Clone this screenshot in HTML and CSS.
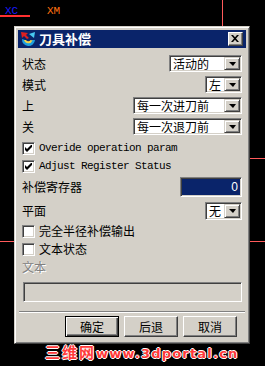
FILE: index.html
```html
<!DOCTYPE html>
<html lang="zh-CN">
<head>
  <meta charset="UTF-8" />
  <title>刀具补偿</title>
  <link rel="stylesheet" href="styles.css">
</head>
<body>

<div class="canvas-mark mark-xc">XC</div>
<div class="canvas-mark mark-xm">XM</div>
<div class="line line-xc"></div>
<div class="line line-v"></div>
<div class="line line-r1"></div>
<div class="line line-l2"></div>
<div class="line line-r2"></div>

<div class="dialog">
  <div class="titlebar">
    <svg class="title-icon" width="16" height="16" viewBox="0 0 16 16">
      <path d="M2 8 A6.5 6.5 0 0 0 15 9 L12 9 A4 4 0 0 1 5 9 Z" fill="#1e9fe0"/>
      <path d="M4 9 A4.5 4.5 0 0 0 12.5 9.5 L10.5 9 A2.6 2.6 0 0 1 6 9 Z" fill="#f2d24a"/>
      <path d="M9 3 L15 1 L14 7 Z" fill="#48c8f0"/>
      <path d="M1 1 L8 2 L6 4 L9 7 L7 8 L4 5 L2 7 Z" fill="#e02020"/>
    </svg>
    <span class="title-text">刀具补偿</span>
    <button class="btn-close">
      <svg width="8" height="7" viewBox="0 0 8 7"><path d="M0 0h2l2 2.3L6 0h2L5 3.5L8 7H6L4 4.7L2 7H0l3-3.5z" fill="#000"/></svg>
    </button>
  </div>

  <div class="content">
    <div class="row">
      <span class="lbl">状态</span>
      <div class="combo w-status"><span class="combo-val">活动的</span><span class="combo-btn"><i class="arrow"></i></span></div>
    </div>
    <div class="row">
      <span class="lbl">模式</span>
      <div class="combo w-short"><span class="combo-val">左</span><span class="combo-btn"><i class="arrow"></i></span></div>
    </div>
    <div class="row">
      <span class="lbl">上</span>
      <div class="combo w-long"><span class="combo-val">每一次进刀前</span><span class="combo-btn"><i class="arrow"></i></span></div>
    </div>
    <div class="row">
      <span class="lbl">关</span>
      <div class="combo w-long"><span class="combo-val">每一次退刀前</span><span class="combo-btn"><i class="arrow"></i></span></div>
    </div>

    <div class="check first">
      <span class="box"><svg width="7" height="7" viewBox="0 0 7 7"><path d="M0 2v3l2 2 5-5V-1L2 4z" fill="#000"/></svg></span>
      <span class="mono">Overide operation param</span>
    </div>
    <div class="check">
      <span class="box"><svg width="7" height="7" viewBox="0 0 7 7"><path d="M0 2v3l2 2 5-5V-1L2 4z" fill="#000"/></svg></span>
      <span class="mono">Adjust Register Status</span>
    </div>

    <div class="row row-tall">
      <span class="lbl">补偿寄存器</span>
      <div class="field w-reg"><span class="sel">0</span></div>
    </div>
    <div class="row row-plane">
      <span class="lbl">平面</span>
      <div class="combo w-short tall"><span class="combo-val">无</span><span class="combo-btn"><i class="arrow"></i></span></div>
    </div>

    <div class="check">
      <span class="box"></span>
      <span class="lbl">完全半径补偿输出</span>
    </div>
    <div class="check">
      <span class="box"></span>
      <span class="lbl">文本状态</span>
    </div>

    <div class="lbl disabled">文本</div>
    <div class="field text-off"></div>

    <div class="sep"></div>

    <div class="btns">
      <button class="btn btn-default">确定</button>
      <button class="btn">后退</button>
      <button class="btn">取消</button>
    </div>
  </div>
</div>

<div class="watermark"><span class="wm-cn">三维网</span>www.3dportal.cn</div>

</body>
</html>
```

FILE: styles.css
```css
* { box-sizing: border-box; margin: 0; padding: 0; }
body {
  background: #000;
  font-family: "Noto Sans CJK SC", "DejaVu Sans", sans-serif;
  font-size: 12px;
  color: #000;
  padding: 26px 0 0 14px;
  position: relative;
  min-height: 366px;
  overflow: hidden;
}

/* marcas do desenho atras da janela */
.canvas-mark {
  position: absolute;
  top: 6px;
  font-family: "Liberation Mono", monospace;
  font-size: 11px;
  line-height: 11px;
}
.mark-xc { left: 5px; color: #1a1aff; }
.mark-xm { left: 47px; color: #ff7010; }
.line { position: absolute; background: #ff3030; }
.line-xc { left: 0; top: 15px; width: 30px; height: 2px; }
.line-v { left: 222px; top: 0; width: 1px; height: 26px; background: #ff5a5a; }
.line-r1 { left: 250px; top: 158px; width: 15px; height: 1px; background: #ff5a5a; }
.line-l2 { left: 0; top: 241px; width: 14px; height: 1px; background: #ff5a5a; }
.line-r2 { left: 250px; top: 241px; width: 15px; height: 1px; background: #ff5a5a; }

.dialog {
  width: 236px;
  background: #d4d0c8;
  border: 1px solid;
  border-color: #d4d0c8 #404040 #404040 #d4d0c8;
  box-shadow: inset 1px 1px #fff, inset -1px -1px #808080;
  padding: 3px;
  position: relative;
}
.titlebar {
  height: 18px;
  background: #0a246a;
  display: flex;
  align-items: center;
  padding: 0 3px 0 2px;
}
.title-icon { flex: none; }
.title-text {
  color: #fff;
  font-weight: bold;
  font-size: 13px;
  margin-left: 3px;
  flex-grow: 1;
  line-height: 18px;
}
.btn-close {
  width: 15px;
  height: 14px;
  background: #d4d0c8;
  border: 1px solid;
  border-color: #fff #404040 #404040 #fff;
  box-shadow: inset -1px -1px #808080;
  display: flex;
  align-items: center;
  justify-content: center;
  padding: 0 1px 1px 0;
}

.content {
  padding: 5px 4px 3px 4px;
}
.row {
  height: 21px;
  display: flex;
  align-items: center;
  justify-content: space-between;
}
.row-tall { height: 24px; }
.row-plane { height: 23px; }
.lbl { line-height: 14px; white-space: nowrap; }

.combo {
  height: 17px;
  display: flex;
  background: #fff;
  border: 1px solid;
  border-color: #808080 #fff #fff #808080;
  box-shadow: inset 1px 1px #404040, inset -1px -1px #d4d0c8;
  padding: 1px;
}
.combo.tall { height: 18px; }
.combo-val {
  flex-grow: 1;
  display: flex;
  align-items: center;
  line-height: 12px;
  padding-left: 2px;
  white-space: nowrap;
}
.combo-btn {
  width: 16px;
  flex: none;
  background: #d4d0c8;
  border: 1px solid;
  border-color: #d4d0c8 #404040 #404040 #d4d0c8;
  box-shadow: inset 1px 1px #fff, inset -1px -1px #808080;
  display: flex;
  align-items: center;
  justify-content: center;
}
.arrow {
  width: 0;
  height: 0;
  border-left: 4px solid transparent;
  border-right: 3px solid transparent;
  border-top: 4px solid #000;
}
.w-status { width: 73px; }
.w-short { width: 37px; }
.w-long { width: 109px; }

.check {
  height: 18px;
  display: flex;
  align-items: center;
  gap: 4px;
}
.check.first { margin-top: 2px; }
.box {
  width: 13px;
  height: 13px;
  flex: none;
  background: #fff;
  border: 1px solid;
  border-color: #808080 #fff #fff #808080;
  box-shadow: inset 1px 1px #404040, inset -1px -1px #d4d0c8;
  display: flex;
  align-items: center;
  justify-content: center;
}
.mono {
  font-family: "Liberation Mono", monospace;
  font-size: 11px;
  letter-spacing: -0.6px;
}

.field {
  border: 1px solid;
  border-color: #808080 #fff #fff #808080;
  box-shadow: inset 1px 1px #404040, inset -1px -1px #d4d0c8;
  padding: 2px;
}
.w-reg {
  width: 62px;
  height: 20px;
  background: #0a246a;
  display: flex;
  justify-content: flex-end;
  align-items: center;
}
.sel {
  color: #fff;
  font-family: "Liberation Sans", sans-serif;
  font-size: 12px;
  padding-right: 1px;
}
.disabled {
  height: 18px;
  line-height: 18px;
  color: #808080;
  text-shadow: 1px 1px #fff;
}
.text-off {
  margin: 6px 0 0 1px;
  height: 20px;
  background: #d4d0c8;
}
.sep {
  margin: 9px -3px 0 -3px;
  border-top: 1px solid #808080;
  border-bottom: 1px solid #fff;
}
.btns {
  margin-top: 3px;
  display: flex;
  justify-content: flex-end;
  gap: 5px;
  padding-right: 5px;
}
.btn {
  width: 54px;
  height: 21px;
  font-family: "Noto Sans CJK SC", sans-serif;
  font-size: 12px;
  background: #d4d0c8;
  border: 1px solid;
  border-color: #fff #404040 #404040 #fff;
  box-shadow: inset -1px -1px #808080;
}
.btn-default {
  border-color: #000;
  box-shadow: inset 1px 1px #fff, inset -1px -1px #404040, inset -2px -2px #808080;
}

.watermark {
  margin: 1px 0 0 31px;
  font-family: "DejaVu Sans", sans-serif;
  font-weight: bold;
  font-size: 13px;
  line-height: 14px;
  letter-spacing: 1.2px;
  color: #ff3a3a;
  text-shadow: -1px 0 #fff, 1px 0 #fff, 0 -1px #fff, 0 1px #fff;
  white-space: nowrap;
}
.wm-cn {
  font-family: "Noto Sans CJK SC", sans-serif;
  font-size: 15px;
  letter-spacing: 2px;
}
```
